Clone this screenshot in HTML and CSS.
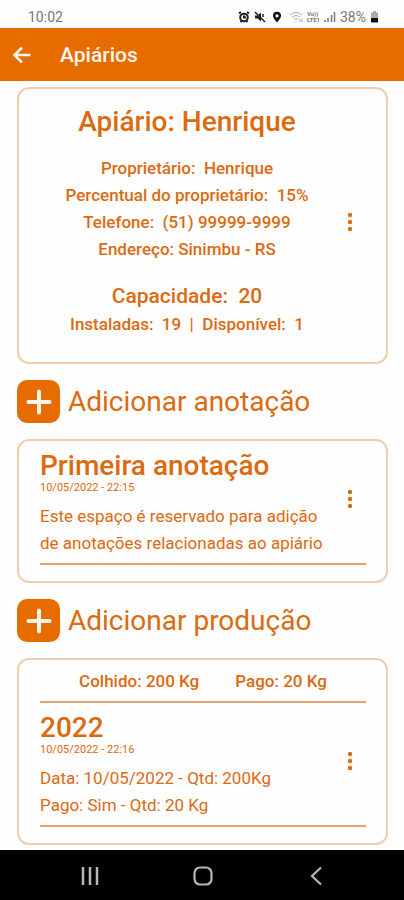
FILE: index.html
```html
<!DOCTYPE html>
<html lang="pt-BR">
<head>
<meta charset="utf-8">
<meta name="viewport" content="width=device-width, initial-scale=1">
<title>Apiários</title>
<link rel="stylesheet" href="styles.css">
</head>
<body>
<div class="status">
  <span class="clock">10:02</span>
  <div class="status-icons">
    <svg width="12" height="12" viewBox="0 0 12 12" fill="none" stroke="#222" stroke-width="2"><circle cx="6" cy="6.5" r="3.8"/><path d="M1 2.5L3 1M11 2.5L9 1M2.5 11l1-1M9.500 11l-1-1M6 4.500v2h2"/></svg>
    <svg width="12" height="12" viewBox="0 0 12 12"><path d="M1 4.500h2.500L7 1.500v9L3.500 7.500H1z" fill="#222"/><path d="M1 1l10 10M9 3v3" stroke="#222" stroke-width="1.500" fill="none"/></svg>
    <svg class="pin" width="10" height="12" viewBox="0 0 10 12"><path d="M5 .8a4 4 0 0 0-4 4C1 7.500 5 11.500 5 11.500s4-4 4-6.700a4 4 0 0 0-4-4zm0 2.400a1.600 1.600 0 1 1 0 3.200 1.600 1.600 0 0 1 0-3.200z" fill="#111" fill-rule="evenodd"/></svg>
    <svg class="wifi" width="14" height="12" viewBox="0 0 14 12" fill="none" stroke="#aaa"><path d="M1 4c3.500-3.200 8.500-3.200 12 0M3 6.300c2.500-2.200 5.500-2.200 8 0M5 8.500c1.300-1.200 2.700-1.200 4 0M7 10v1M11 8v3M13 8v3"/></svg>
    <span class="volte"><span>Vo))</span><span>LTE1</span></span>
    <svg width="12" height="12" viewBox="0 0 12 12" fill="none" stroke="#777" stroke-width="1.500"><path d="M1 11V9M4 11V7M7.500 11V4M10.500 11V1"/></svg>
    <span class="percent">38%</span>
    <svg width="9" height="12" viewBox="0 0 9 12"><path d="M3 0h3v1.500h2V7H1V1.500h2z" fill="#aaa"/><path d="M1 7h7v4.500H1z" fill="#111"/></svg>
  </div>
</div>

<header class="appbar">
  <button class="back" type="button" aria-label="Voltar">
    <svg width="20" height="20" viewBox="0 0 20 20" fill="none" stroke="currentColor" stroke-width="2.500"><path d="M18.500 10H2.500M10 2.500L2.500 10l7.500 7.500"/></svg>
  </button>
  <h1>Apiários</h1>
</header>

<main>
  <section class="card summary">
    <div class="row">
      <div class="details">
        <h2 class="title">Apiário: Henrique</h2>
        <div class="owner">
          <p>Proprietário:&nbsp; Henrique</p>
          <p>Percentual do proprietário:&nbsp; 15%</p>
          <p>Telefone:&nbsp; (51) 99999-9999</p>
          <p>Endereço: Sinimbu - RS</p>
        </div>
        <p class="capacity">Capacidade:&nbsp; 20</p>
        <p>Instaladas:&nbsp; 19&nbsp; |&nbsp; Disponível:&nbsp; 1</p>
      </div>
      <button class="more" type="button" aria-label="Opções do apiário"><svg width="6" height="20" viewBox="0 0 6 20" fill="currentColor"><circle cx="3" cy="3" r="2.200"/><circle cx="3" cy="10" r="2.200"/><circle cx="3" cy="17" r="2.200"/></svg></button>
    </div>
  </section>

  <button class="add" type="button">
    <span class="plus"><svg width="26" height="26" viewBox="0 0 26 26" fill="none" stroke="currentColor" stroke-width="4" stroke-linecap="round"><path d="M13 2.500v21M2.500 13h21"/></svg></span>
    <span>Adicionar anotação</span>
  </button>

  <section class="card">
    <div class="row entry">
      <div class="text">
        <h2 class="title">Primeira anotação</h2>
        <time>10/05/2022 - 22:15</time>
        <p>Este espaço é reservado para adição de anotações relacionadas ao apiário</p>
      </div>
      <button class="more" type="button" aria-label="Opções da anotação"><svg width="6" height="20" viewBox="0 0 6 20" fill="currentColor"><circle cx="3" cy="3" r="2.200"/><circle cx="3" cy="10" r="2.200"/><circle cx="3" cy="17" r="2.200"/></svg></button>
    </div>
  </section>

  <button class="add" type="button">
    <span class="plus"><svg width="26" height="26" viewBox="0 0 26 26" fill="none" stroke="currentColor" stroke-width="4" stroke-linecap="round"><path d="M13 2.500v21M2.500 13h21"/></svg></span>
    <span>Adicionar produção</span>
  </button>

  <section class="card">
    <div class="totals"><span>Colhido: 200 Kg</span><span>Pago: 20 Kg</span></div>
    <div class="row entry">
      <div class="text">
        <h2 class="title">2022</h2>
        <time>10/05/2022 - 22:16</time>
        <p>Data: 10/05/2022 - Qtd: 200Kg</p>
        <p>Pago: Sim - Qtd: 20 Kg</p>
      </div>
      <button class="more" type="button" aria-label="Opções da produção"><svg width="6" height="20" viewBox="0 0 6 20" fill="currentColor"><circle cx="3" cy="3" r="2.200"/><circle cx="3" cy="10" r="2.200"/><circle cx="3" cy="17" r="2.200"/></svg></button>
    </div>
  </section>
</main>

<nav class="system">
  <button type="button" aria-label="Recentes"><svg width="20" height="20" viewBox="0 0 20 20" fill="none" stroke="currentColor" stroke-width="2.500"><path d="M3 1v18M10 1v18M17 1v18"/></svg></button>
  <button type="button" aria-label="Início"><svg width="20" height="20" viewBox="0 0 20 20" fill="none" stroke="currentColor" stroke-width="2.200"><rect x="1.500" y="1.500" width="17" height="17" rx="5.500"/></svg></button>
  <button type="button" aria-label="Voltar"><svg width="20" height="20" viewBox="0 0 20 20" fill="none" stroke="currentColor" stroke-width="2.200"><path d="M15 1.500L6 10l9 8.500"/></svg></button>
</nav>
</body>
</html>
```
FILE: styles.css
```css
* { box-sizing: border-box; }
body {
  margin: 0;
  min-height: 100vh;
  display: flex;
  flex-direction: column;
  background: #fefefe;
  color: #dc6a10;
  font: 17px/27px Roboto, sans-serif;
}
h1, h2, p { margin: 0; font-weight: 500; }
button {
  padding: 0;
  border: 0;
  background: none;
  color: inherit;
  font: inherit;
}
svg { display: block; }

.status {
  display: flex;
  justify-content: space-between;
  align-items: center;
  height: 28px;
  padding: 6px 25px 0 28px;
  color: #777;
  font-size: 14px;
  line-height: 20px;
}
.status-icons { display: flex; align-items: center; gap: 4px; }
.pin { margin: 0 3px 0 2px; }
.volte { display: flex; flex-direction: column; font-size: 6px; line-height: 6px; font-weight: 700; }

.appbar {
  display: flex;
  align-items: center;
  gap: 28px;
  height: 53px;
  padding: 0 12px;
  background: #e76c00;
  color: #fff6ec;
}
.appbar h1 { font-size: 21px; line-height: 28px; }

main {
  flex: 1;
  display: flex;
  flex-direction: column;
  gap: 16px;
  padding: 6px 16px 4px 17px;
}
.card {
  border: 2px solid #f1cdab;
  border-radius: 12px;
  padding: 8px 20px 16px 21px;
}
.row { display: flex; align-items: center; }
.details { flex: 1; text-align: center; }
.more {
  display: flex;
  justify-content: center;
  align-items: center;
  width: 32px;
  height: 48px;
}
.title { font-size: 28px; line-height: 34px; }
.summary { padding-top: 16px; padding-bottom: 24px; }
.owner { margin: 16px 0 18px; }
.capacity { font-size: 21px; line-height: 30px; }

.add {
  display: flex;
  align-items: center;
  gap: 8px;
  font-size: 28px;
  line-height: 34px;
  text-align: left;
}
.plus {
  display: flex;
  justify-content: center;
  align-items: center;
  width: 43px;
  height: 43px;
  border-radius: 10px;
  background: #e76c00;
  color: #fff6ec;
}

.entry { border-bottom: 2px solid #e5a06c; padding-bottom: 6px; }
.entry .more { margin-bottom: 8px; }
.text { flex: 1; }
.text p { font-weight: 400; }
time { display: block; margin-bottom: 10px; font-size: 11px; line-height: 10px; }
.totals {
  display: flex;
  justify-content: center;
  gap: 36px;
  margin-bottom: 8px;
  padding-bottom: 6px;
  border-bottom: 2px solid #e5a06c;
  font-weight: 500;
}

.system {
  display: flex;
  justify-content: space-around;
  align-items: center;
  height: 50px;
  padding: 2px 32px 0 34px;
  background: #000;
  color: #b8b8b8;
}
```
